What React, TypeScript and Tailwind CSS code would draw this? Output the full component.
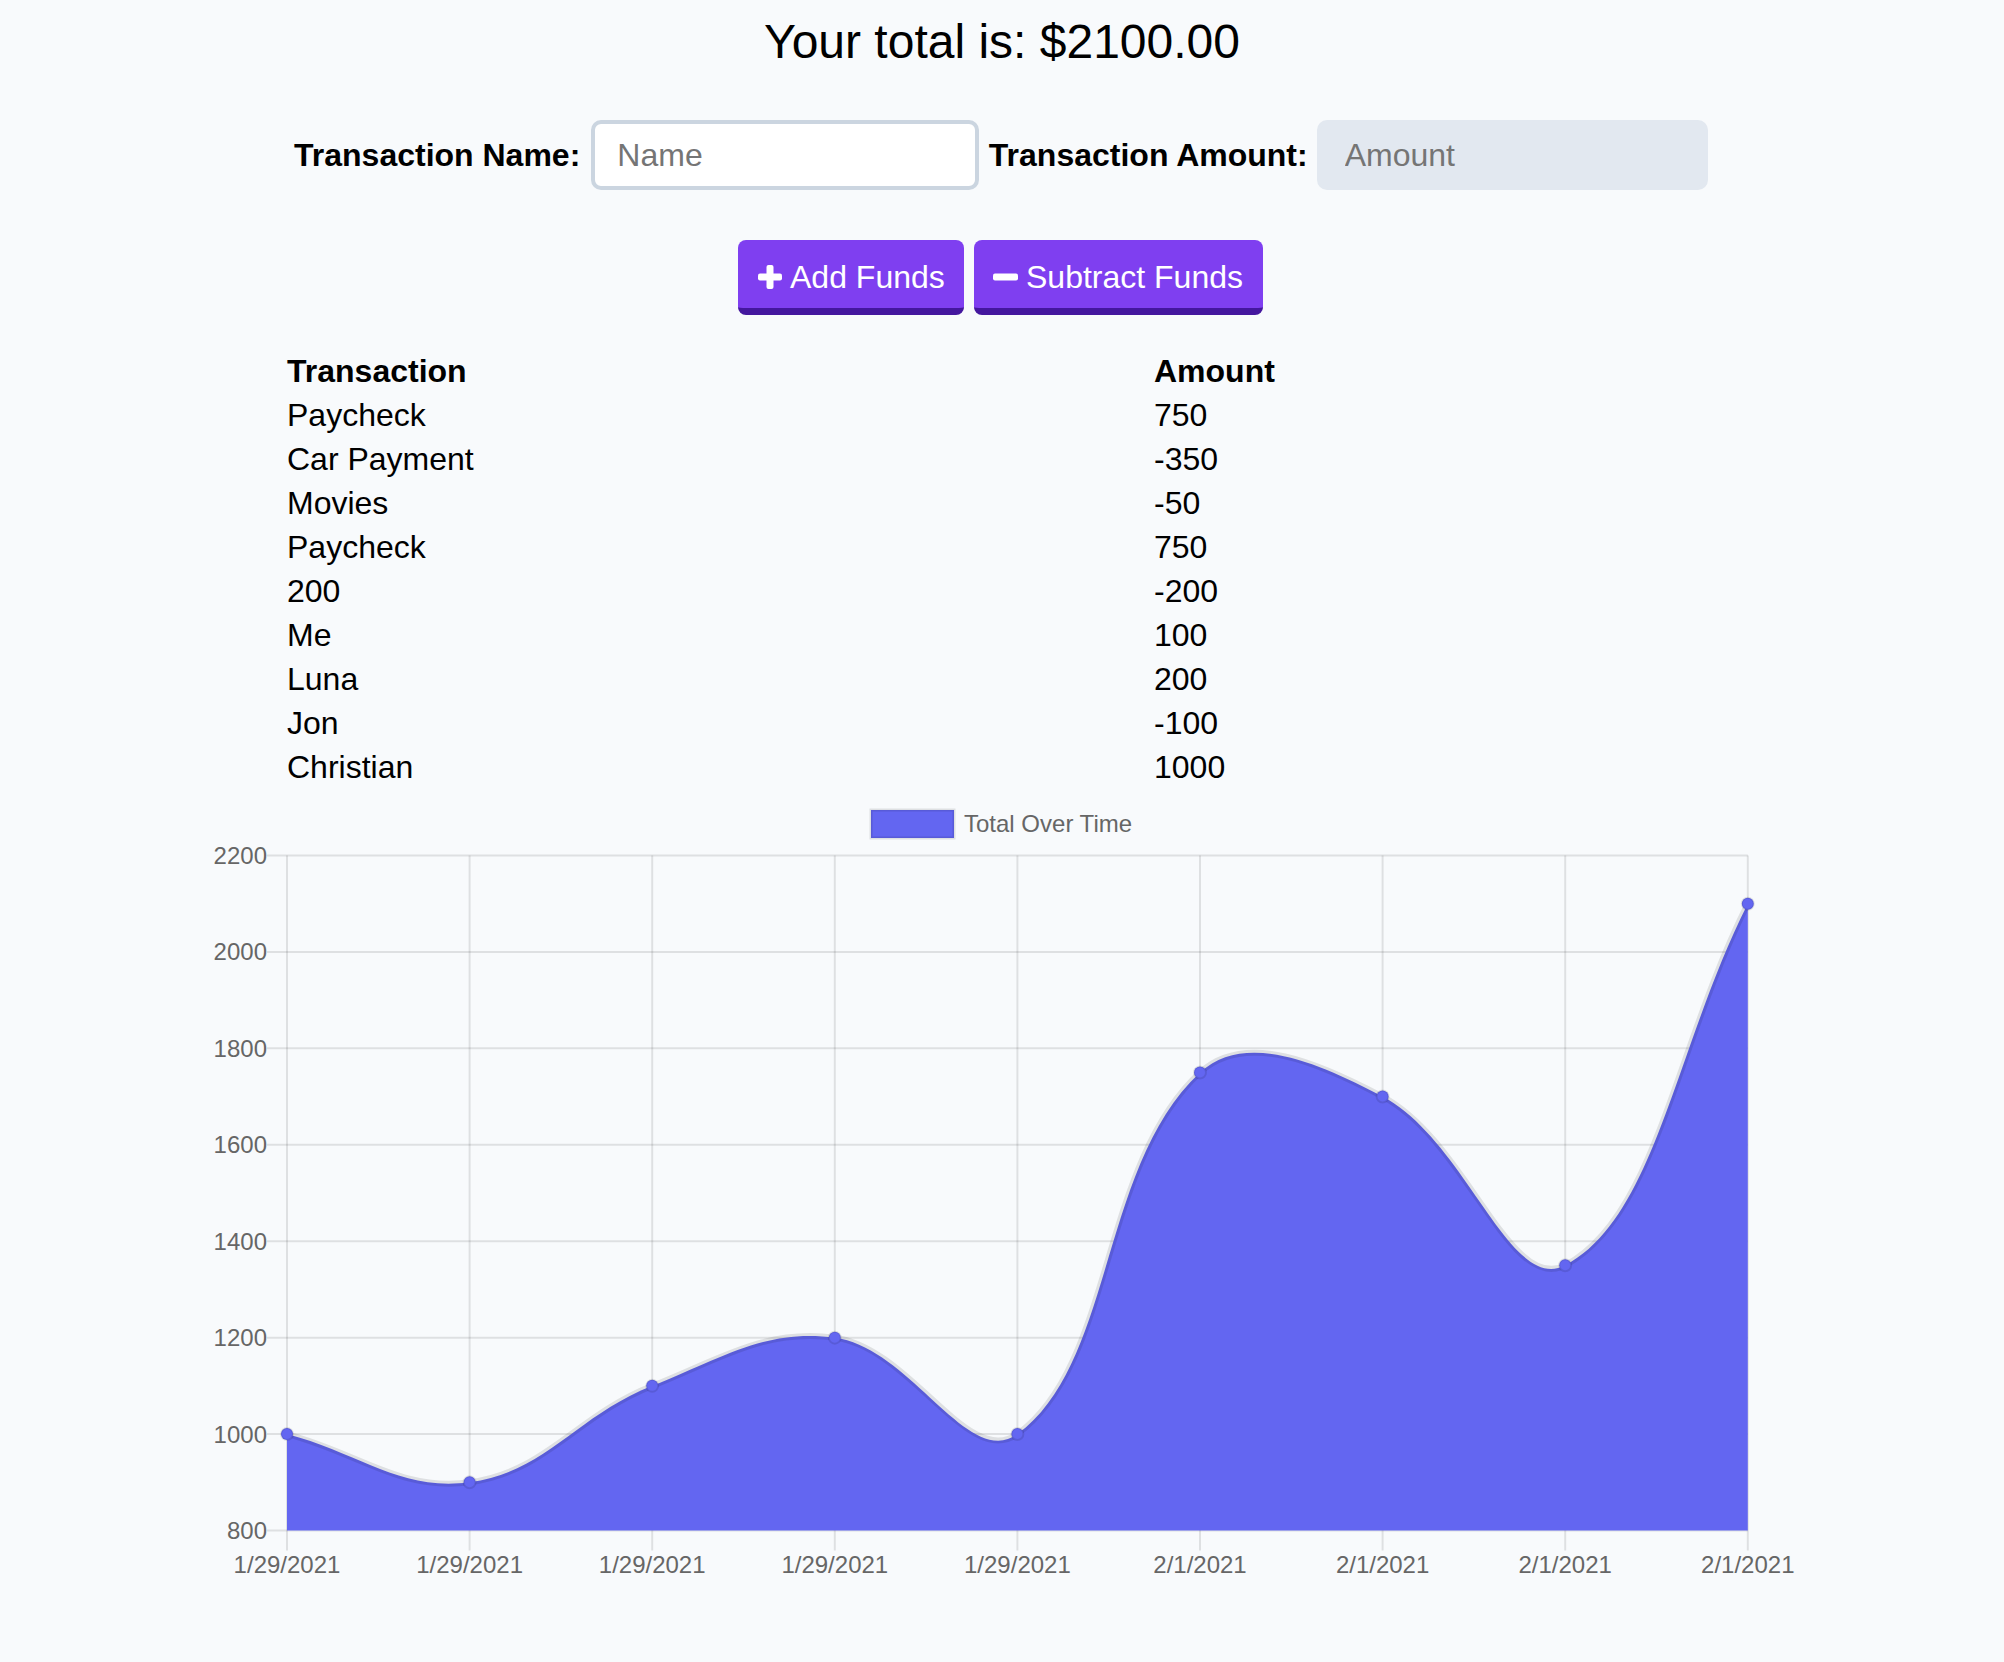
import React from "react";

const rows: [string, string][] = [
  ["Paycheck", "750"],
  ["Car Payment", "-350"],
  ["Movies", "-50"],
  ["Paycheck", "750"],
  ["200", "-200"],
  ["Me", "100"],
  ["Luna", "200"],
  ["Jon", "-100"],
  ["Christian", "1000"],
];

const values = [1000, 900, 1100, 1200, 1000, 1750, 1700, 1350, 2100];
const labels = [
  "1/29/2021",
  "1/29/2021",
  "1/29/2021",
  "1/29/2021",
  "1/29/2021",
  "2/1/2021",
  "2/1/2021",
  "2/1/2021",
  "2/1/2021",
];

const X0 = 287;
const DX = 182.6;
const TOP = 855.5;
const BOT = 1530.5;
const RIGHT = X0 + DX * 8;
const yOf = (v: number) => TOP + ((2200 - v) * (BOT - TOP)) / 1400;

type P = { x: number; y: number };

function buildPath() {
  const pts: P[] = values.map((v, i) => ({ x: X0 + DX * i, y: yOf(v) }));
  const t = 0.4;
  const clamp = (v: number, a: number, b: number) => Math.max(a, Math.min(b, v));
  const cps = pts.map((cur, i) => {
    const prev = pts[i - 1] ?? cur;
    const next = pts[i + 1] ?? cur;
    const d01 = Math.hypot(cur.x - prev.x, cur.y - prev.y);
    const d12 = Math.hypot(next.x - cur.x, next.y - cur.y);
    let s01 = d01 / (d01 + d12);
    let s12 = d12 / (d01 + d12);
    if (isNaN(s01)) s01 = 0;
    if (isNaN(s12)) s12 = 0;
    const fa = t * s01;
    const fb = t * s12;
    const cpPrev = {
      x: clamp(cur.x - fa * (next.x - prev.x), X0, RIGHT),
      y: clamp(cur.y - fa * (next.y - prev.y), TOP, BOT),
    };
    const cpNext = {
      x: clamp(cur.x + fb * (next.x - prev.x), X0, RIGHT),
      y: clamp(cur.y + fb * (next.y - prev.y), TOP, BOT),
    };
    return { cpPrev, cpNext };
  });
  let d = `M ${pts[0].x} ${pts[0].y}`;
  for (let i = 0; i < pts.length - 1; i++) {
    const a = cps[i].cpNext;
    const b = cps[i + 1].cpPrev;
    const p = pts[i + 1];
    d += ` C ${a.x} ${a.y} ${b.x} ${b.y} ${p.x} ${p.y}`;
  }
  const fill = `${d} L ${RIGHT} ${BOT} L ${X0} ${BOT} Z`;
  return { line: d, fill, pts };
}

function Chart() {
  const { line, fill, pts } = buildPath();
  const yTicks = [2200, 2000, 1800, 1600, 1400, 1200, 1000, 800];
  const grid = "rgba(0,0,0,0.1)";
  return (
    <svg
      width={2004}
      height={840}
      viewBox="0 789 2004 840"
      className="block"
      style={{ fontFamily: '"Liberation Sans", Arial, sans-serif' }}
    >
      {/* legend */}
      <rect x={871} y={810} width={83} height={28} fill="#6366f1" stroke={grid} strokeWidth={3} />
      <text x={964} y={832} fontSize={24} fill="#666">
        Total Over Time
      </text>
      {/* horizontal grid */}
      {yTicks.map((v) => (
        <g key={v}>
          <line x1={267} x2={RIGHT} y1={yOf(v)} y2={yOf(v)} stroke={grid} strokeWidth={2} />
          <text x={267} y={yOf(v) + 8.5} fontSize={24} fill="#666" textAnchor="end">
            {v}
          </text>
        </g>
      ))}
      {/* vertical grid */}
      {labels.map((l, i) => (
        <g key={i}>
          <line
            x1={X0 + DX * i}
            x2={X0 + DX * i}
            y1={TOP}
            y2={BOT + 20}
            stroke={grid}
            strokeWidth={2}
          />
          <text x={X0 + DX * i} y={1573} fontSize={24} fill="#666" textAnchor="middle">
            {l}
          </text>
        </g>
      ))}
      <path d={fill} fill="#6366f1" />
      <path d={line} fill="none" stroke={grid} strokeWidth={6} />
      {pts.map((p, i) => (
        <circle key={i} cx={p.x} cy={p.y} r={6} fill="#6366f1" stroke={grid} strokeWidth={2} />
      ))}
    </svg>
  );
}

function PlusIcon() {
  return (
    <svg width="24" height="24" viewBox="0 0 24 24" className="block">
      <rect x="8.5" y="0" width="7" height="24" rx="2" fill="white" />
      <rect x="0" y="8.5" width="24" height="7" rx="2" fill="white" />
    </svg>
  );
}

function MinusIcon() {
  return (
    <svg width="25" height="24" viewBox="0 0 25 24" className="block">
      <rect x="0" y="8.5" width="25" height="7" rx="2" fill="white" />
    </svg>
  );
}

export default function App() {
  return (
    <div
      className="min-h-[1662px] w-[2004px] bg-[#f8fafc] text-black"
      style={{ fontFamily: '"Liberation Sans", Arial, sans-serif' }}
    >
      <h1 className="pt-[14px] h-[70px] text-center text-[48px] leading-[56px] font-normal">
        Your total is: $2100.00
      </h1>

      <div className="mt-[50px] h-[70px] flex items-center pl-[294px]">
        <label className="text-[32px] font-bold leading-[37px] mr-[11px]">Transaction Name:</label>
        <input
          placeholder="Name"
          className="w-[388px] h-[70px] bg-white border-4 border-[#cbd5e0] rounded-[10px] pl-[22px] text-[32px] placeholder:text-[#757575] outline-none"
        />
        <label className="text-[32px] font-bold leading-[37px] ml-[9.5px] mr-[9px]">
          Transaction Amount:
        </label>
        <input
          placeholder="Amount"
          className="w-[391px] h-[70px] bg-[#e2e8f0] border-4 border-[#e2e8f0] rounded-[10px] pl-[24px] text-[32px] placeholder:text-[#757575] outline-none"
        />
      </div>

      <div className="mt-[50px] h-[75px] flex gap-[10px] pl-[738px]">
        <button className="h-[75px] w-[226px] flex items-center pl-[20px] pt-[6px] bg-[#7f3ff0] border-b-[7px] border-[#44179e] rounded-[8px] text-white text-[32px] leading-[37px]">
          <PlusIcon />
          <span className="ml-[8px]">Add Funds</span>
        </button>
        <button className="h-[75px] w-[289px] flex items-center pl-[19px] pt-[6px] bg-[#7f3ff0] border-b-[7px] border-[#44179e] rounded-[8px] text-white text-[32px] leading-[37px]">
          <MinusIcon />
          <span className="ml-[8px]">Subtract Funds</span>
        </button>
      </div>

      <div className="mt-[34px] pl-[287px] text-[32px] leading-[44px]">
        <div className="flex font-bold">
          <div className="w-[867px]">Transaction</div>
          <div>Amount</div>
        </div>
        {rows.map(([n, a], i) => (
          <div key={i} className="flex">
            <div className="w-[867px]">{n}</div>
            <div>{a}</div>
          </div>
        ))}
      </div>

      <Chart />
    </div>
  );
}
